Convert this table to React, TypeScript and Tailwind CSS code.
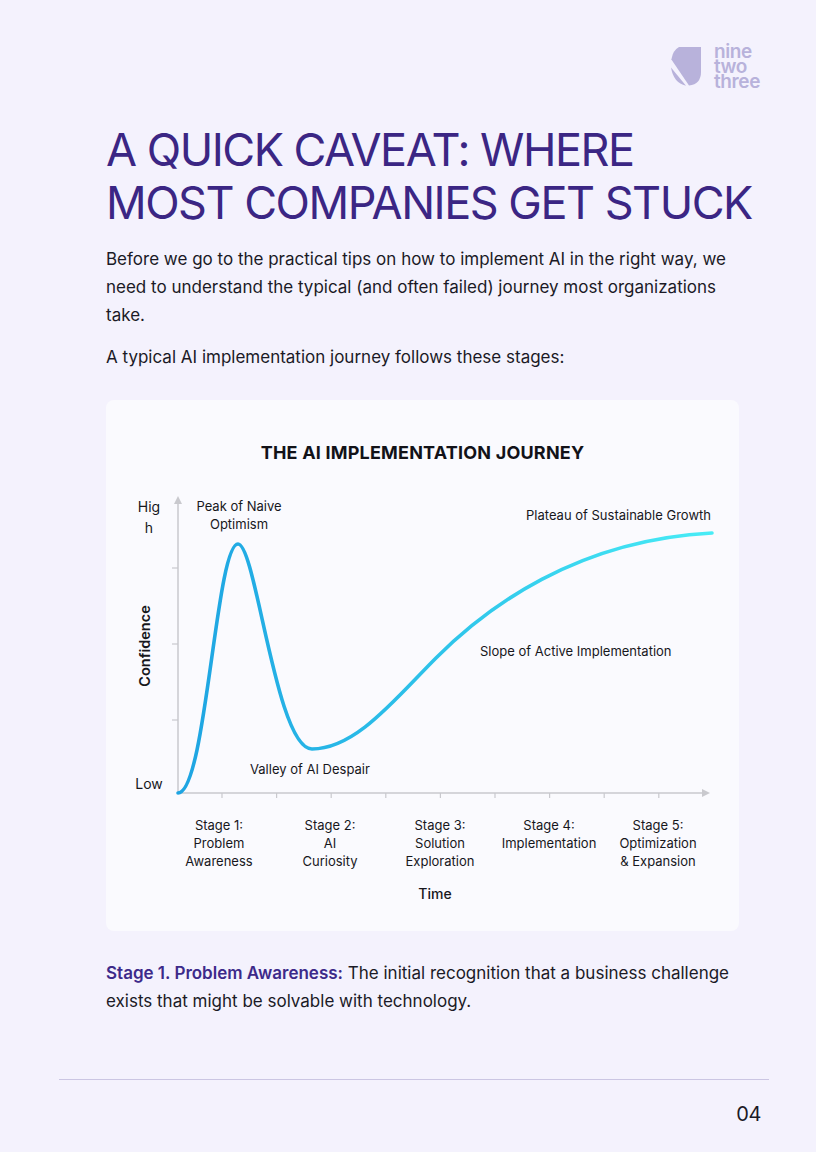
import React from 'react';

const sans = "font-['Inter',sans-serif]";

function Logo() {
  return (
    <div className="flex items-center gap-[13px]">
      <svg width="30" height="39" viewBox="0 0 30 39" aria-hidden="true">
        <path d="M8 0 H30 V25 Q30 37 18 38.6 L0.4 12.5 Q2 3 8 0 Z" fill="#b8b2db" />
        <path d="M0 20.5 L15 38.7 Q2.5 36 0 20.5 Z" fill="#b8b2db" />
      </svg>
      <div className="flex flex-col text-[19px] font-semibold leading-[15px] tracking-[-0.02em] text-[#b8b2db]">
        <span>nine</span>
        <span>two</span>
        <span>three</span>
      </div>
    </div>
  );
}

const ticksX = [116, 170.6, 225.2, 279.8, 334.4, 389, 443.6, 498.2, 552.8];
const ticksY = [168, 244, 320];

const stages = [
  { x: 113, lines: ['Stage 1:', 'Problem', 'Awareness'] },
  { x: 224, lines: ['Stage 2:', 'AI', 'Curiosity'] },
  { x: 334, lines: ['Stage 3:', 'Solution', 'Exploration'] },
  { x: 443, lines: ['Stage 4:', 'Implementation'] },
  { x: 552, lines: ['Stage 5:', 'Optimization', '& Expansion'] },
];

function JourneyChart() {
  return (
    <svg width="633" height="531" viewBox="0 0 633 531" className="block" fontFamily="Inter, sans-serif">
      <defs>
        <linearGradient id="curve" x1="72" y1="0" x2="606" y2="0" gradientUnits="userSpaceOnUse">
          <stop offset="0" stopColor="#1ea4e2" />
          <stop offset="0.5" stopColor="#2ec4ea" />
          <stop offset="1" stopColor="#48ecf6" />
        </linearGradient>
      </defs>

      <text x="316.5" y="59" textAnchor="middle" fontSize="18" fontWeight="700" letterSpacing="0.2" fill="#121218">
        THE AI  IMPLEMENTATION JOURNEY
      </text>

      {/* axes */}
      <line x1="72" y1="393" x2="72" y2="102" stroke="#c9c9ce" strokeWidth="1.5" />
      <path d="M68 104 L72 96 L76 104 Z" fill="#c9c9ce" />
      <line x1="72" y1="393" x2="598" y2="393" stroke="#c9c9ce" strokeWidth="1.5" />
      <path d="M596 389 L604 393 L596 397 Z" fill="#c9c9ce" />
      {ticksX.map((x) => (
        <line key={x} x1={x} y1="393" x2={x} y2="398" stroke="#c9c9ce" strokeWidth="1.2" />
      ))}
      {ticksY.map((y) => (
        <line key={y} x1="66" y1={y} x2="72" y2={y} stroke="#c9c9ce" strokeWidth="1.2" />
      ))}

      {/* curve */}
      <path
        d="M72 393 C100 393 110 144 132 144 C150 144 170 349 206 349 C250 349 290 298 330 258 C380 208 470 140 606 133"
        fill="none"
        stroke="url(#curve)"
        strokeWidth="3.6"
        strokeLinecap="round"
      />

      <g fontSize="14" fill="#17171c" textAnchor="middle">
        <text x="43" y="112">Hig</text>
        <text x="43" y="133">h</text>
        <text x="43" y="389">Low</text>
      </g>
      <text
        x="40"
        y="246"
        transform="rotate(-90 40 246)"
        textAnchor="middle"
        dominantBaseline="middle"
        fontSize="14.5"
        fontWeight="600"
        fill="#17171c"
      >
        Confidence
      </text>

      <g fontSize="13" fill="#17171c">
        <text x="133" y="111" textAnchor="middle">Peak of Naive</text>
        <text x="133" y="129" textAnchor="middle">Optimism</text>
        <text x="420" y="120">Plateau of Sustainable Growth</text>
        <text x="374" y="256">Slope of Active Implementation</text>
        <text x="144" y="374">Valley of AI Despair</text>
      </g>

      <g fontSize="13" fill="#17171c" textAnchor="middle">
        {stages.map((s) =>
          s.lines.map((l, i) => (
            <text key={s.x + l} x={s.x} y={430 + i * 18}>
              {l}
            </text>
          ))
        )}
      </g>
      <text x="329" y="499" textAnchor="middle" fontSize="14" fontWeight="500" fill="#17171c">
        Time
      </text>
    </svg>
  );
}

export default function App() {
  return (
    <div className={`${sans} relative flex h-[1152px] w-[816px] flex-col bg-[#f4f2fd] text-[#1b1a26]`}>
      <header className="flex justify-end pr-[56px] pt-[44px]">
        <Logo />
      </header>

      <main className="flex flex-col pl-[106px] pr-[50px]">
        <h1 className="mt-[34px] text-[45px] font-normal uppercase leading-[53px] tracking-[-0.033em] text-[#3b2684]">
          A Quick Caveat: Where
          <br />
          Most Companies Get Stuck
        </h1>

        <p className="mt-[16px] max-w-[630px] text-[17px] leading-[28px]">
          Before we go to the practical tips on how to implement AI in the right way, we need to understand the
          typical (and often failed) journey most organizations take.
        </p>
        <p className="mt-[14px] text-[17px] leading-[28px]">
          A typical AI implementation journey follows these stages:
        </p>

        <section className="mt-[29px] w-[633px] rounded-[8px] bg-[#fafafe]">
          <JourneyChart />
        </section>

        <p className="mt-[28px] max-w-[630px] text-[17px] leading-[28px]">
          <span className="font-semibold text-[#3d2a8a]">Stage 1. Problem Awareness:</span> The initial recognition
          that a business challenge exists that might be solvable with technology.
        </p>
      </main>

      <footer className="mt-auto flex flex-col pb-[26px] pl-[59px] pr-[47px]">
        <div className="h-px bg-[#cbc6e3]" />
        <div className="mt-[22px] self-end pr-[8px] text-[20px] leading-[24px] tracking-[-0.02em]">04</div>
      </footer>
    </div>
  );
}
